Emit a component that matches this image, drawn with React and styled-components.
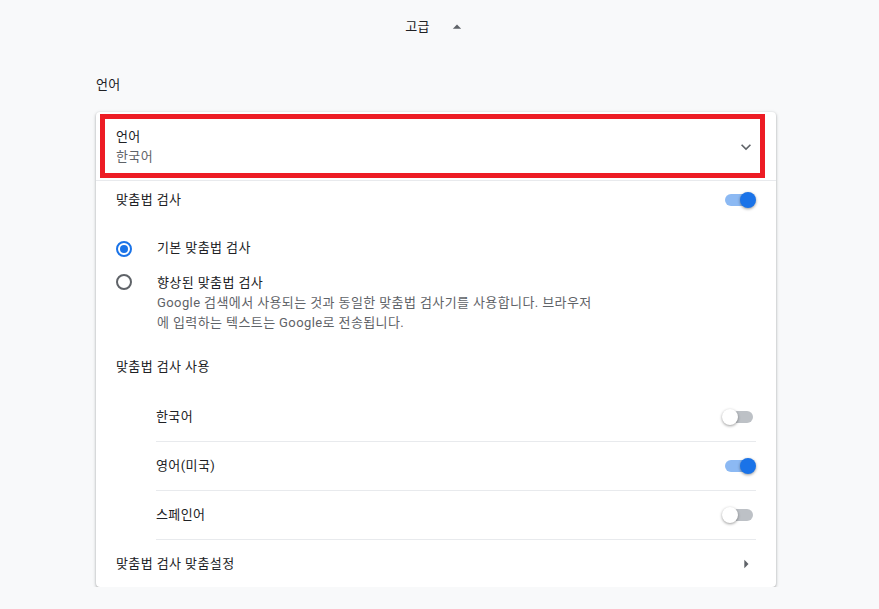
import styled, { createGlobalStyle } from "styled-components";

const GlobalStyle = createGlobalStyle`
  body {
    margin: 0;
    background: #f8f9fa;
    font-family: Roboto, "Noto Sans CJK KR", sans-serif;
    font-size: 13px;
    line-height: 20px;
    letter-spacing: 0.4px;
    color: #202124;
  }
`;

const ArrowDropUp = () => (
    <svg width="20" height="20" viewBox="0 0 24 24" fill="#5f6368">
        <path d="M7 14l5-5 5 5z" />
    </svg>
);

const ExpandMore = () => (
    <svg width="20" height="20" viewBox="0 0 24 24" fill="#5f6368">
        <path d="M16.59 8.59L12 13.17 7.41 8.59 6 10l6 6 6-6z" />
    </svg>
);

const ArrowRight = () => (
    <svg width="20" height="20" viewBox="0 0 24 24" fill="#5f6368">
        <path d="M10 17l5-5-5-5v10z" />
    </svg>
);

const App = () => {
    return (
        <>
            <GlobalStyle />
            <Main>
                <Header>
                    <AdvancedButton>
                        고급
                        <ArrowDropUp />
                    </AdvancedButton>
                </Header>

                <SectionTitle>언어</SectionTitle>

                <Card>
                    <SelectRow>
                        <div>
                            <div>언어</div>
                            <Secondary>한국어</Secondary>
                        </div>
                        <ExpandMore />
                    </SelectRow>
                    <Highlight />

                    <Row $h={38}>
                        <span>맞춤법 검사</span>
                        <Toggle checked />
                    </Row>

                    <RadioGroup>
                        <RadioRow>
                            <Radio $checked />
                            <RadioText>기본 맞춤법 검사</RadioText>
                        </RadioRow>
                        <RadioRow $top>
                            <Radio />
                            <RadioText>
                                <div>향상된 맞춤법 검사</div>
                                <Secondary>
                                    Google 검색에서 사용되는 것과 동일한 맞춤법 검사기를 사용합니다. 브라우저
                                    <br />
                                    에 입력하는 텍스트는 Google로 전송됩니다.
                                </Secondary>
                            </RadioText>
                        </RadioRow>
                    </RadioGroup>

                    <Row $h={48}>
                        <span>맞춤법 검사 사용</span>
                    </Row>

                    <SubList>
                        <SubRow>
                            <span>한국어</span>
                            <Toggle />
                        </SubRow>
                        <SubRow>
                            <span>영어(미국)</span>
                            <Toggle checked />
                        </SubRow>
                        <SubRow>
                            <span>스페인어</span>
                            <Toggle />
                        </SubRow>
                    </SubList>

                    <Row $h={47}>
                        <span>맞춤법 검사 맞춤설정</span>
                        <ArrowRight />
                    </Row>
                </Card>
            </Main>
        </>
    )
}

export default App;


const Toggle = ({ checked }) => (
    <ToggleBox $on={checked}>
        <Knob $on={checked} />
    </ToggleBox>
);

const Main = styled.div`
    width: 680px;
    margin-left: 96px;
`
const Header = styled.div`
    height: 54px;
    display: flex;
    align-items: center;
    justify-content: center;
`
const AdvancedButton = styled.div`
    display: flex;
    align-items: center;
    gap: 17px;
    color: #202124;
`
const SectionTitle = styled.div`
    padding-top: 21px;
    margin-bottom: 17px;
    color: #202124;
`
const Card = styled.div`
    position: relative;
    background: #ffffff;
    border-radius: 4px;
    box-shadow: 0 1px 2px 0 rgba(60, 64, 67, 0.3), 0 1px 3px 1px rgba(60, 64, 67, 0.15);
`
const Secondary = styled.div`
    color: #5f6368;
`
const SelectRow = styled.div`
    height: 69px;
    box-sizing: border-box;
    padding: 1px 20px 0 20px;
    display: flex;
    align-items: center;
    justify-content: space-between;
    border-bottom: 1px solid #e8eaed;
`
const Highlight = styled.div`
    position: absolute;
    left: 4px;
    top: 2px;
    width: 665px;
    height: 64px;
    box-sizing: border-box;
    border: 5px solid #ed1c24;
    pointer-events: none;
`
const Row = styled.div`
    height: ${p => p.$h}px;
    box-sizing: border-box;
    padding: 0 20px;
    display: flex;
    align-items: center;
    justify-content: space-between;
`
const RadioGroup = styled.div`
    padding: 9px 20px 10px;
`
const RadioRow = styled.div`
    display: flex;
    align-items: ${p => p.$top ? 'flex-start' : 'center'};
    height: ${p => p.$top ? 'auto' : '40px'};
    padding-top: ${p => p.$top ? '5px' : '0'};
`
const Radio = styled.span`
    flex: none;
    width: 16px;
    height: 16px;
    box-sizing: border-box;
    border-radius: 50%;
    border: 2px solid ${p => p.$checked ? '#1a73e8' : '#5f6368'};
    margin-top: 1px;
    display: flex;
    align-items: center;
    justify-content: center;

    &::after {
        content: '';
        width: 8px;
        height: 8px;
        border-radius: 50%;
        background: ${p => p.$checked ? '#1a73e8' : 'transparent'};
    }
`
const RadioText = styled.div`
    margin-left: 25px;
    white-space: nowrap;
`
const SubList = styled.div`
    padding: 2px 20px 0 60px;
`
const SubRow = styled.div`
    height: 49px;
    box-sizing: border-box;
    display: flex;
    align-items: center;
    justify-content: space-between;
    border-bottom: 1px solid #e8eaed;
`
const ToggleBox = styled.div`
    position: relative;
    width: 34px;
    height: 16px;

    &::before {
        content: '';
        position: absolute;
        left: 3px;
        right: 3px;
        top: 2px;
        height: 12px;
        border-radius: 6px;
        background: ${p => p.$on ? 'rgba(26, 115, 232, 0.5)' : '#bdc1c6'};
    }
`
const Knob = styled.span`
    position: absolute;
    top: 0;
    left: ${p => p.$on ? '18px' : '0'};
    width: 16px;
    height: 16px;
    border-radius: 50%;
    background: ${p => p.$on ? '#1a73e8' : '#ffffff'};
    box-shadow: 0 1px 3px 0 rgba(0, 0, 0, 0.4);
`
